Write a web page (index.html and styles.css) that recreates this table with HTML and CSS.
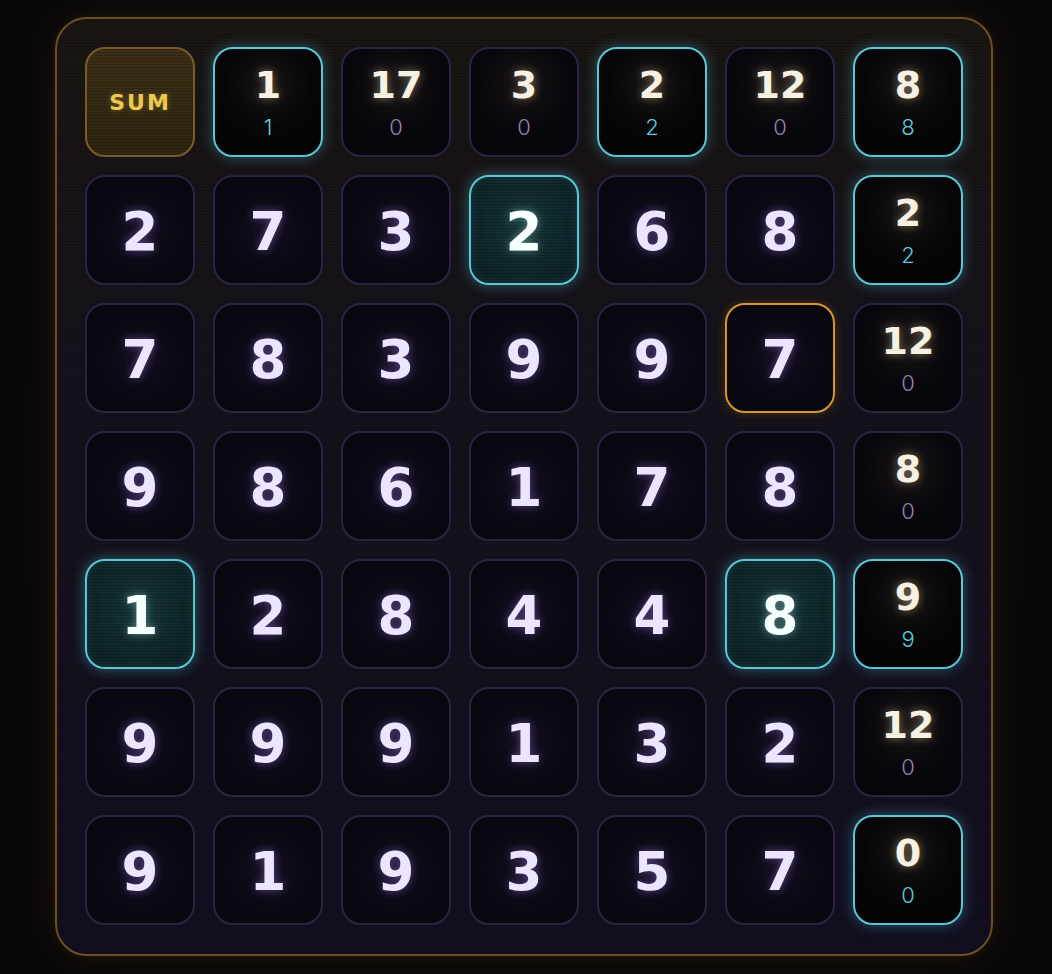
FILE: index.html
```html
<!DOCTYPE html>
<html lang="en">
<head>
<meta charset="utf-8">
<title>Sum Grid</title>
<link rel="stylesheet" href="styles.css">
</head>
<body>
<main class="board">
  <div class="cell label">SUM</div>
  <div class="cell total hit"><span class="big">1</span><span class="small">1</span></div>
  <div class="cell total"><span class="big">17</span><span class="small">0</span></div>
  <div class="cell total"><span class="big">3</span><span class="small">0</span></div>
  <div class="cell total hit"><span class="big">2</span><span class="small">2</span></div>
  <div class="cell total"><span class="big">12</span><span class="small">0</span></div>
  <div class="cell total hit"><span class="big">8</span><span class="small">8</span></div>

  <div class="cell num">2</div>
  <div class="cell num">7</div>
  <div class="cell num">3</div>
  <div class="cell num on">2</div>
  <div class="cell num">6</div>
  <div class="cell num">8</div>
  <div class="cell total hit"><span class="big">2</span><span class="small">2</span></div>

  <div class="cell num">7</div>
  <div class="cell num">8</div>
  <div class="cell num">3</div>
  <div class="cell num">9</div>
  <div class="cell num">9</div>
  <div class="cell num cursor">7</div>
  <div class="cell total"><span class="big">12</span><span class="small">0</span></div>

  <div class="cell num">9</div>
  <div class="cell num">8</div>
  <div class="cell num">6</div>
  <div class="cell num">1</div>
  <div class="cell num">7</div>
  <div class="cell num">8</div>
  <div class="cell total"><span class="big">8</span><span class="small">0</span></div>

  <div class="cell num on">1</div>
  <div class="cell num">2</div>
  <div class="cell num">8</div>
  <div class="cell num">4</div>
  <div class="cell num">4</div>
  <div class="cell num on">8</div>
  <div class="cell total hit"><span class="big">9</span><span class="small">9</span></div>

  <div class="cell num">9</div>
  <div class="cell num">9</div>
  <div class="cell num">9</div>
  <div class="cell num">1</div>
  <div class="cell num">3</div>
  <div class="cell num">2</div>
  <div class="cell total"><span class="big">12</span><span class="small">0</span></div>

  <div class="cell num">9</div>
  <div class="cell num">1</div>
  <div class="cell num">9</div>
  <div class="cell num">3</div>
  <div class="cell num">5</div>
  <div class="cell num">7</div>
  <div class="cell total hit"><span class="big">0</span><span class="small">0</span></div>
</main>
</body>
</html>
```

FILE: styles.css
```css
* { box-sizing: border-box; }

html, body {
  margin: 0;
  height: 100%;
}

body {
  background: radial-gradient(ellipse at 50% 50%, #0d0b0e 0%, #070609 70%);
  padding: 17px 0 0 55px;
  font-family: "DejaVu Sans", "Liberation Sans", sans-serif;
}

.board {
  width: 938px;
  height: 939px;
  padding: 28px;
  border: 2px solid #6c5022;
  border-radius: 32px;
  background:
    repeating-linear-gradient(to bottom, rgba(0,0,0,0.18) 0 1px, transparent 1px 3px),
    linear-gradient(to bottom, #1a1612 0%, #16121b 35%, #120f21 100%);
  box-shadow: 0 0 50px rgba(140, 95, 30, 0.18), 0 0 12px rgba(140, 95, 30, 0.12);
  display: grid;
  grid-template-columns: repeat(7, 110px);
  grid-template-rows: repeat(7, 110px);
  gap: 18px;
}

.cell {
  border-radius: 20px;
  border: 2px solid #2a2343;
  background: radial-gradient(circle at 50% 50%, #140e22 0%, #0a0812 55%, #07060c 100%);
  display: flex;
  flex-direction: column;
  align-items: center;
  justify-content: center;
}

.num {
  font-weight: 700;
  font-size: 53px;
  line-height: 1;
  color: #ece5ff;
  text-shadow: 0 0 10px rgba(170, 140, 255, 0.45);
  padding-top: 2px;
}

.num.on {
  border-color: #5cc6d4;
  background:
    repeating-linear-gradient(to bottom, rgba(0,0,0,0.22) 0 1px, transparent 1px 3px),
    radial-gradient(circle at 50% 45%, #173a3c 0%, #112a2d 50%, #0c1d22 100%);
  box-shadow: 0 0 14px rgba(80, 200, 220, 0.45), inset 0 0 12px rgba(80, 200, 220, 0.15);
  color: #f4fffe;
  text-shadow: 0 0 8px rgba(200, 255, 250, 0.4);
}

.num.cursor {
  border-color: #d6952f;
  box-shadow: 0 0 10px rgba(214, 149, 47, 0.25);
}

.total {
  background: radial-gradient(circle at 50% 33%, #1a1517 0%, #08070b 50%, #050408 100%);
  gap: 11px;
}

.total.hit {
  border-color: #5cc6d4;
  background: radial-gradient(circle at 50% 33%, #181513 0%, #060608 50%, #040406 100%);
  box-shadow: 0 0 14px rgba(80, 200, 220, 0.4);
}

.big {
  font-weight: 700;
  font-size: 38px;
  line-height: 38px;
  color: #f6f1e4;
  text-shadow: 0 0 10px rgba(255, 230, 170, 0.45);
}

.small {
  font-family: "Inter", "Liberation Sans", sans-serif;
  font-weight: 300;
  font-size: 22px;
  line-height: 24px;
  color: #8e84b6;
}

.hit .small {
  color: #5ccbdc;
}

.label {
  border-color: #7a5b26;
  background:
    repeating-linear-gradient(to bottom, rgba(0,0,0,0.2) 0 1px, transparent 1px 3px),
    linear-gradient(to bottom, #3d2f18, #30250f);
  color: #ecca4d;
  font-weight: 700;
  font-size: 22px;
  letter-spacing: 2px;
  text-shadow: 0 0 6px rgba(236, 202, 77, 0.35);
}
```
